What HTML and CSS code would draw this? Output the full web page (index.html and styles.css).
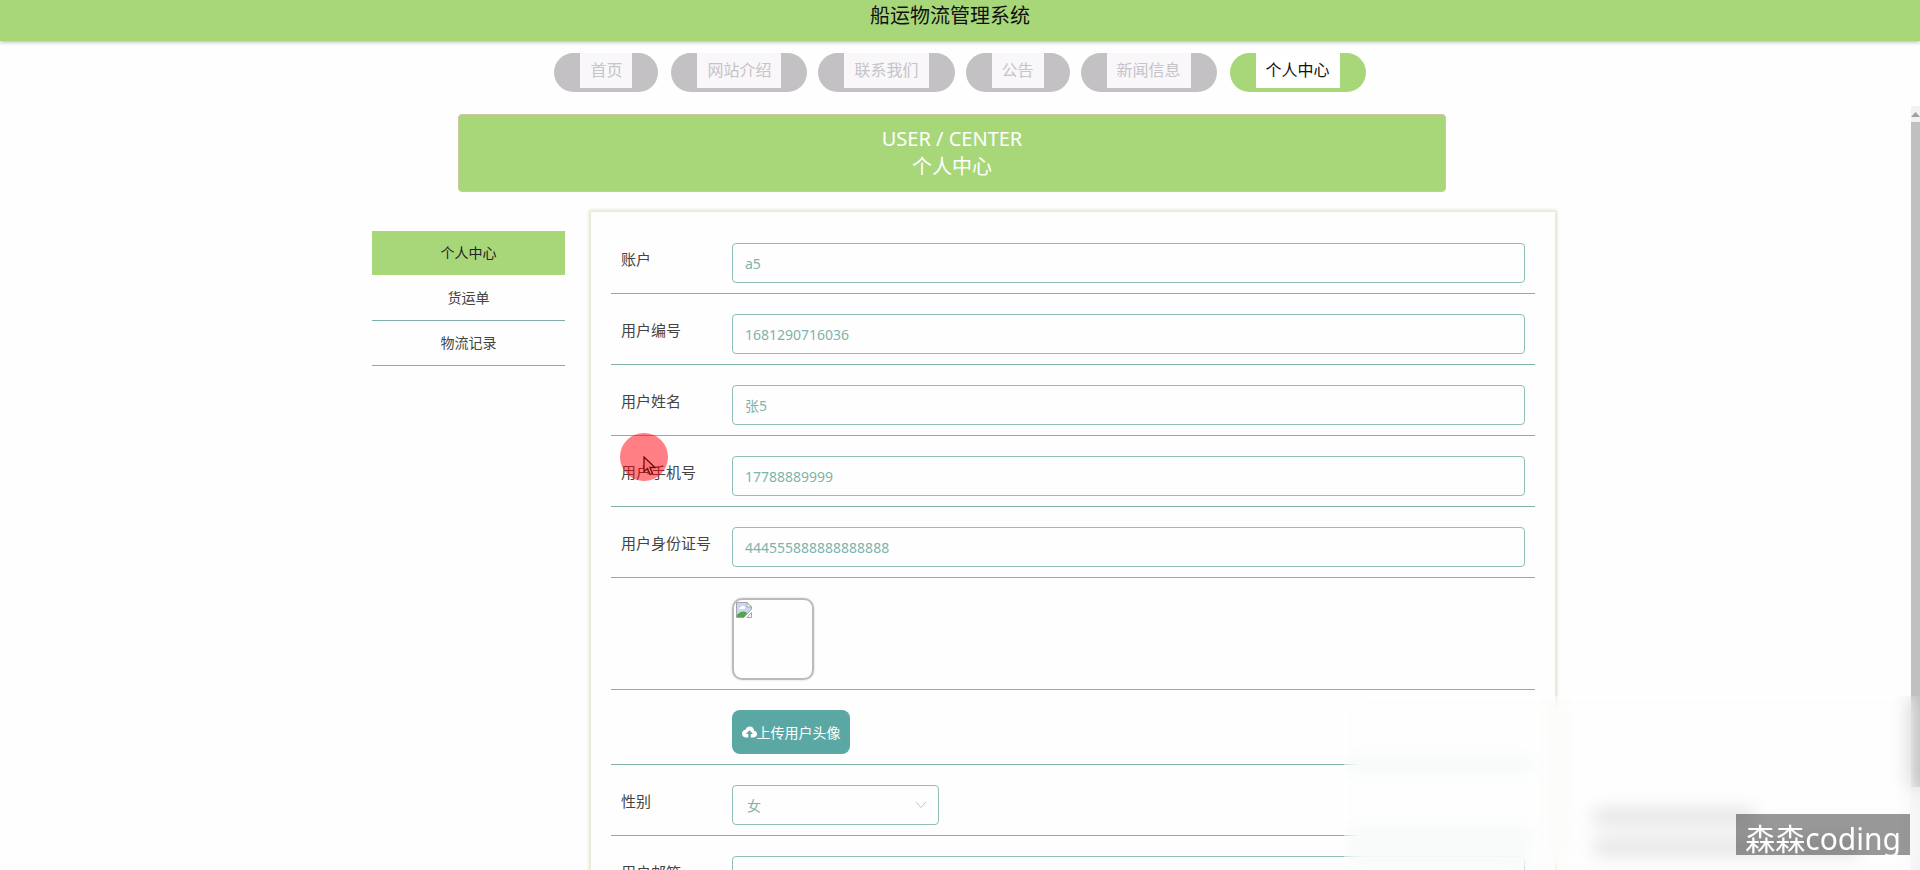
FILE: index.html
```html
<!DOCTYPE html>
<html lang="zh-CN">
<head>
<meta charset="utf-8">
<title>船运物流管理系统</title>
<link rel="stylesheet" href="styles.css">
</head>
<body>
<header class="topbar"><h1 class="topbar-title">船运物流管理系统</h1></header>

<nav class="nav">
  <a class="nav-item nav-item-spaced" href="#">首页</a>
  <a class="nav-item" href="#">网站介绍</a>
  <a class="nav-item" href="#">联系我们</a>
  <a class="nav-item" href="#">公告</a>
  <a class="nav-item nav-item-spaced" href="#">新闻信息</a>
  <a class="nav-item nav-item-active" href="#">个人中心</a>
</nav>

<main class="content">
  <section class="banner">
    <p>USER / CENTER</p>
    <h2 class="banner-title">个人中心</h2>
  </section>

  <div class="workspace">
    <aside class="sidebar">
      <a class="side-item side-item-active" href="#">个人中心</a>
      <a class="side-item" href="#">货运单</a>
      <a class="side-item" href="#">物流记录</a>
    </aside>

    <form class="panel">
      <div class="row">
        <label class="label" for="account">账户</label>
        <input class="field" id="account" type="text" value="a5">
      </div>
      <div class="row">
        <label class="label" for="number">用户编号</label>
        <input class="field" id="number" type="text" value="1681290716036">
      </div>
      <div class="row">
        <label class="label" for="name">用户姓名</label>
        <input class="field" id="name" type="text" value="张5">
      </div>
      <div class="row">
        <label class="label" for="phone">用户手机号</label>
        <input class="field" id="phone" type="text" value="17788889999">
      </div>
      <div class="row">
        <label class="label" for="idcard">用户身份证号</label>
        <input class="field" id="idcard" type="text" value="444555888888888888">
      </div>
      <div class="row row-offset row-avatar">
        <div class="avatar">
          <svg width="16" height="16" viewBox="0 0 16 16">
            <path d="M0.500 0.500H11L15.500 5V7L8 15.500H0.500Z" fill="#c9d9f5" stroke="#a3a3a8"/>
            <path d="M11 0.500V5H15.500Z" fill="#fff" stroke="#a3a3a8"/>
            <path d="M3 7a2 2 0 0 1 2-2 2 2 0 0 1 4 2Z" fill="#fff"/>
            <path d="M1 15V13Q5 8 10 10L11 11.500 8 15Z" fill="#52a447"/>
            <path d="M11 15.500 15.500 10.500V15.500Z" fill="#fff" stroke="#a3a3a8"/>
          </svg>
        </div>
      </div>
      <div class="row row-offset">
        <button class="upload" type="button">
          <svg width="15" height="14" viewBox="0 0 30 28">
            <path d="M24 11.500C24 6 20 3 15.500 3 11.500 3 8.500 5.500 7.500 9 3 9.500 0 13 0 17.500 0 22 3.500 25 8 25H12.500V18H8L15 10.500 22 18H17.500V25H23C27 25 30 22 30 18 30 14.500 27.500 12 24 11.500Z" fill="#fff"/>
          </svg>上传用户头像
        </button>
      </div>
      <div class="row">
        <label class="label" for="gender">性别</label>
        <div class="select-wrap">
          <select class="field field-select" id="gender"><option>女</option><option>男</option></select>
          <svg class="chevron" width="12" height="8" viewBox="0 0 12 8"><path d="M1 1 6 6.500 11 1" fill="none" stroke="#c0c4cc"/></svg>
        </div>
      </div>
      <div class="row">
        <label class="label" for="email">用户邮箱</label>
        <input class="field" id="email" type="text">
      </div>
    </form>
  </div>
</main>

<div class="scrollbar">
  <div class="scroll-up"><svg width="9" height="5" viewBox="0 0 9 5"><path d="M0 5 4.500 0 9 5Z" fill="#a0a0a0"/></svg></div>
  <div class="scroll-thumb"></div>
</div>

<div class="pointer">
  <svg class="pointer-arrow" width="13" height="20" viewBox="0 0 13 20"><path d="M1 1V15.500L4.500 12.500 7 18.500 9.500 17.500 7 11.500H12Z" fill="#ff7378" stroke="#6e0d12" stroke-width="1.300"/></svg>
</div>

<div class="notice-smudge"><span class="smudge"></span><span class="smudge smudge-wide"></span></div>
<div class="haze"></div>
<div class="watermark">森森coding</div>
</body>
</html>
```

FILE: styles.css
```css
* { box-sizing: border-box; }

body {
  margin: 0;
  height: 100vh;
  overflow: hidden;
  position: relative;
  display: flex;
  flex-direction: column;
  background: #fefefe;
  color: #444;
  font-family: "Noto Sans", "Noto Sans CJK SC", sans-serif;
  font-size: 14px;
}

h1, h2, p { margin: 0; font-weight: 400; }
a { text-decoration: none; }

.topbar {
  flex: none;
  height: 41px;
  padding-right: 20px;
  background: #a8d77a;
  box-shadow: 0 1px 4px rgba(0, 0, 0, 0.3);
  text-align: center;
}
.topbar-title { font-size: 20px; line-height: 32px; color: #111; }

.nav {
  flex: none;
  display: flex;
  justify-content: center;
  gap: 11px;
  padding: 12px 0 22px;
}
.nav-item {
  border: solid #c3c1c4;
  border-width: 0 26px 4px;
  border-radius: 20px;
  padding: 0 10px;
  background: #f9f7fa;
  color: #c6c4c7;
  font-size: 16px;
  line-height: 35px;
}
.nav-item-spaced { margin-right: 2px; }
.nav-item-active { border-color: #a8d77a; background: #fff; color: #111; }

.content { flex: 1; min-height: 0; padding: 0 16px 0 0; overflow: hidden; }

.banner {
  max-width: 988px;
  margin: 0 auto;
  padding: 10px 0;
  border: 1px solid #cdc79f;
  border-radius: 4px;
  background: #a8d77a;
  color: #fff;
  text-align: center;
  font-size: 20px;
  line-height: 28px;
}
.banner-title { font-size: 20px; line-height: 28px; }

.workspace {
  display: flex;
  align-items: flex-start;
  gap: 25px;
  max-width: 1208px;
  margin: 19px auto 0;
  padding-left: 24px;
}

.sidebar { flex: 0 0 193px; margin-top: 20px; }
.side-item {
  display: block;
  height: 45px;
  border-bottom: 1px solid #7fb0ab;
  color: #444;
  text-align: center;
  line-height: 44px;
}
.side-item-active { border-color: #fefefe; background: #a8d77a; background-clip: padding-box; color: #222; }

.panel {
  flex: 1;
  padding: 11px 20px;
  border: 1px solid #e9e9d8;
  box-shadow: 0 0 3px 1px #e2e2cc;
}
.row {
  display: flex;
  padding: 20px 10px 10px;
  border-bottom: 1px solid #82b3ab;
}
.row-offset { padding-left: 121px; }
.row-avatar { padding-bottom: 9px; }
.label { flex: 0 0 111px; font-size: 15px; line-height: 32px; }
.field {
  flex: 1;
  min-width: 0;
  height: 40px;
  padding: 0 12px;
  border: 1px solid #8fbfb8;
  border-radius: 4px;
  background: #fefefe;
  color: #7fb3ac;
  font: inherit;
}
.select-wrap { position: relative; display: flex; width: 207px; }
.field-select { appearance: none; padding: 0 14px; }
.chevron { position: absolute; right: 12px; top: 16px; }

.avatar {
  width: 82px;
  height: 82px;
  padding: 2px;
  border: 2px solid #bcbabf;
  border-radius: 10px;
  box-shadow: 0 0 2px #c9c4cc;
}
.upload {
  display: flex;
  align-items: center;
  justify-content: center;
  width: 118px;
  height: 44px;
  padding: 0;
  border: 0;
  border-radius: 8px;
  background: #5ba7a4;
  color: #fff;
  font: inherit;
}

.scrollbar {
  position: absolute;
  top: 106px;
  right: 0;
  bottom: 0;
  width: 9px;
  background: #f3f1f4;
}
.scroll-up { display: flex; align-items: center; height: 16px; }
.scroll-thumb { height: 87%; background: #c0bfc1; }

.pointer {
  position: absolute;
  left: 620px;
  top: 433px;
  width: 48px;
  height: 48px;
  border-radius: 50%;
  background: rgba(255, 0, 10, 0.5);
}
.pointer-arrow { position: absolute; left: 23px; top: 23px; }

.haze {
  position: absolute;
  right: 0;
  bottom: 0;
  width: 576px;
  height: 174px;
  backdrop-filter: blur(9px);
}
.notice-smudge {
  position: absolute;
  right: 60px;
  bottom: 16px;
  display: flex;
  flex-direction: column;
  gap: 16px;
  width: 266px;
}
.smudge { width: 160px; height: 14px; background: #dedede; }
.smudge-wide { width: 100%; }

.watermark {
  position: absolute;
  right: 10px;
  bottom: 15px;
  height: 41px;
  padding: 0 9px;
  background: rgba(0, 0, 0, 0.4);
  color: #fff;
  font-size: 30px;
  line-height: 50px;
}
```
